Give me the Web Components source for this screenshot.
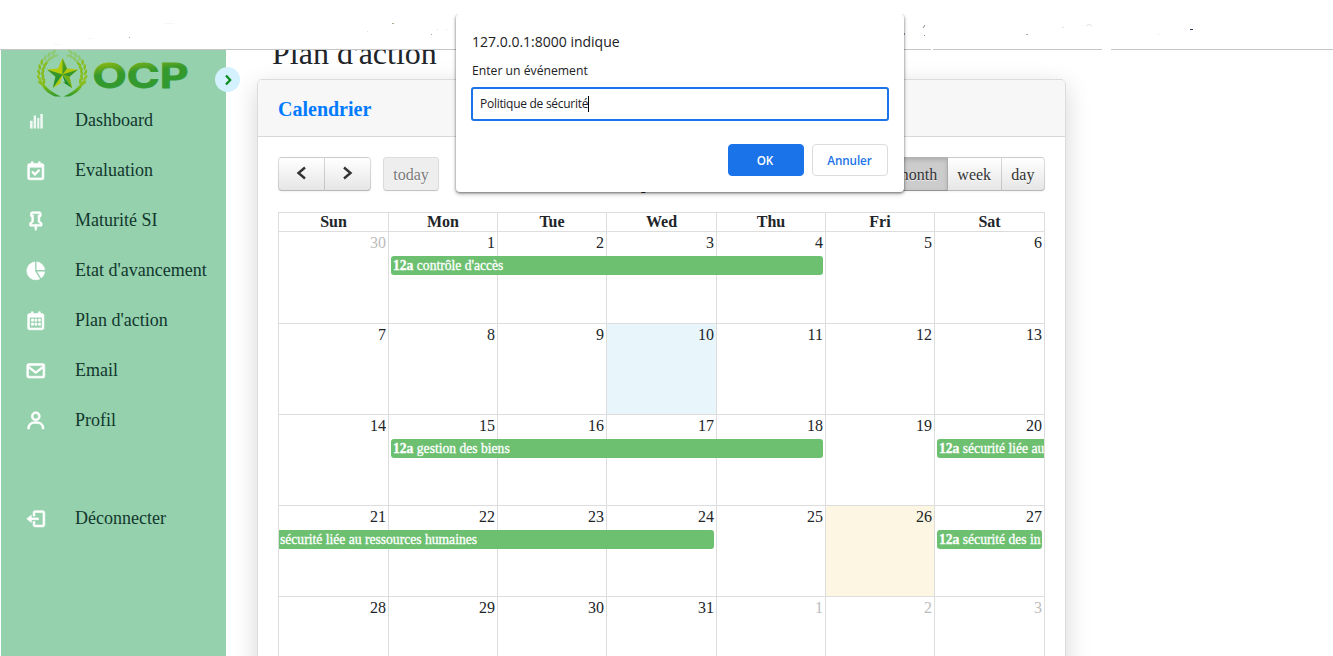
<!DOCTYPE html>
<html lang="fr">
<head>
<meta charset="utf-8">
<title>Plan d'action</title>
<style>
html,body{margin:0;height:100%;overflow:hidden;background:#fff;font-family:"Liberation Serif",serif;color:#212529}
</style>
</head>
<body>
<plan-app></plan-app>
<script>
const define = (name, html, init) => customElements.define(name, class extends HTMLElement {
  connectedCallback() {
    if (this.shadowRoot) return;
    this.attachShadow({mode: 'open'}).innerHTML = typeof html === 'function' ? html(this) : html;
    if (init) init(this);
  }
});

const ICONS = {
  bars: '<path fill-opacity=".85" stroke="none" d="M5.500 12h3v8.500h-3zM9.600 6h2.700v14.500H9.600zM13.600 9h2.300v11.500h-2.300zM17 4.500h2.800v16H17z"/>',
  check: '<path d="m11 17.414 5.707-5.707-1.414-1.414L11 14.586l-2.293-2.293-1.414 1.414z"/><path d="M19 4h-2V2h-2v2H9V2H7v2H5c-1.103 0-2 .897-2 2v14c0 1.103.897 2 2 2h14c1.103 0 2-.897 2-2V6c0-1.103-.897-2-2-2zm0 16H5V8h14z"/>',
  pin: '<path fill-rule="evenodd" d="M16 2H8a2 2 0 0 0-2 2v3l1.500 1v4.500L5.300 14.300A1 1 0 0 0 5 15v2a1 1 0 0 0 1 1h5v3l1 2 1-2v-3h5a1 1 0 0 0 1-1v-2a1 1 0 0 0-.3-.700L16.500 12.500V8l1.500-1V4a2 2 0 0 0-2-2zM8 4h8v1.500h-1.500V13l2.500 2.500v.5H7v-.5L9.500 13V5.500H8z"/>',
  pie: '<circle cx="12" cy="12" r="10"/><path d="M12 1v11l6.200 10M12 12h11" fill="none" stroke="#95d1ad" stroke-width="1.500"/>',
  calendar: '<path d="M7 10h2.500v2.500H7zm0 4.500h2.500V17H7zm4-4.500h2.200v2.500H11zm0 4.500h2.200V17H11zm4-4.500h2.200v2.500H15zm0 4.500h2.200V17H15z"/><path d="M19 4h-2V2h-2v2H9V2H7v2H5c-1.103 0-2 .897-2 2v14c0 1.103.897 2 2 2h14c1.103 0 2-.897 2-2V6c0-1.103-.897-2-2-2zm0 16H5V8h14z"/>',
  mail: '<path d="M20 4H4c-1.103 0-2 .897-2 2v12c0 1.103.897 2 2 2h16c1.103 0 2-.897 2-2V6c0-1.103-.897-2-2-2zm0 2v.511l-8 6.223-8-6.222V6h16zM4 18V9.044l7.386 5.745a.994.994 0 0 0 1.228 0L20 9.044 20.002 18H4z"/>',
  user: '<path d="M12 2a5 5 0 1 0 5 5 5 5 0 0 0-5-5zm0 8a3 3 0 1 1 3-3 3 3 0 0 1-3 3zm9 11v-1a7 7 0 0 0-7-7h-4a7 7 0 0 0-7 7v1h2v-1a5 5 0 0 1 5-5h4a5 5 0 0 1 5 5v1z"/>',
  logout: '<path d="m2 12 5 4v-3h8v-2H7V8z"/><path d="M20 3h-9c-1.103 0-2 .897-2 2v4h2V5h9v14h-9v-4H9v4c0 1.103.897 2 2 2h9c1.103 0 2-.897 2-2V5c0-1.103-.897-2-2-2z"/>'
};

define('nav-item', el => `<style>
:host{display:flex;align-items:center;height:50px;padding-left:24px;font-size:18px;color:#12372d}
svg{width:21.6px;height:21.6px;fill:#fff;stroke:#fff;stroke-width:.7;margin-right:28.4px;position:relative;top:1px;flex:none}
</style><svg viewBox="0 0 24 24">${ICONS[el.getAttribute('icon')]}</svg><slot></slot>`);

/* Laurel wreath: leaves are repeated along each arc. */
const leaves = (() => {
  let s = '';
  for (let i = 0; i < 8; i++) {
    const deg = 158 + i * 13, a = deg * Math.PI / 180;
    for (const [r, tilt] of [[23.500, 65], [19.500, 112]]) {
      const x = 25 + r * Math.cos(a), y = 25 + r * Math.sin(a);
      s += `<ellipse cx="${x.toFixed(1)}" cy="${y.toFixed(1)}" rx="3" ry="1.300" opacity="${i > 4 ? .4 : .95}" transform="rotate(${deg + tilt} ${x.toFixed(1)} ${y.toFixed(1)})"/>`;
    }
  }
  return s;
})();

define('ocp-logo', `<style>:host{display:block;height:45px;width:154px;margin-left:35px}svg{display:block;overflow:hidden}</style>
<svg width="154" height="47" viewBox="0 0 154 47">
<defs><linearGradient id="g" x1="0" y1="0" x2=".25" y2="1"><stop offset=".1" stop-color="#a8c20a"/><stop offset=".5" stop-color="#36992b"/><stop offset="1" stop-color="#2f9a31"/></linearGradient>
<linearGradient id="l" x1="0" y1="0" x2="0" y2="1"><stop offset="0" stop-color="#b7cf3a"/><stop offset=".55" stop-color="#7dba18"/><stop offset="1" stop-color="#2f9a2c"/></linearGradient>
<linearGradient id="d" x1="0" y1="0" x2="0" y2="1"><stop offset="0" stop-color="#5fa51b"/><stop offset="1" stop-color="#0f8a3a"/></linearGradient></defs>
<g transform="translate(1.200 -1)">
<g fill="#86bb16"><g>${leaves}</g><g transform="translate(50 0) scale(-1 1)">${leaves}</g></g>
<path d="M1 24C2 37 10 45 18 47.500h6C13 43 5 36 1 24zM49 24c-1 13-9 21-17 23.500h-6c11-4.500 19-11.500 23-23.500z" fill="url(#l)"/>
<g transform="translate(25.300 25.500)">
<path d="M0-16.500 4.500-6 15.500-5 7 2.200 9.600 13.500 0 7.500-9.600 13.500-7 2.200-15.500-5-4.500-6z" fill="#b3c90b"/>
<path d="M0-16.500 4.500-6 0 0zM15.500-5 7 2.200 0 0zM9.600 13.500 0 7.500V0zM-9.600 13.500-7 2.200 0 0zM-15.500-5-7 2.200 0 0z" fill="url(#d)"/>
<path d="M7 2.200 9.600 13.500 0 0z" fill="#6fb01a"/>
<path d="M0 1 2.500 8H-2.500z" fill="#95d1ad"/>
</g></g>
<text x="56.500" y="37.500" font-family="Inter" font-weight="700" font-size="34" textLength="96" lengthAdjust="spacingAndGlyphs" fill="url(#g)" stroke="url(#g)" stroke-width=".8">OCP</text>
</svg>`);

define('side-bar', `<style>
:host{display:flex;flex-direction:column;width:225px;margin-left:1px;background:#95d1ad;position:relative;flex:none}
.gap{height:48px;flex:none}
.toggle{position:absolute;left:214px;top:17px;width:25px;height:25px;border-radius:50%;background:#d4f1ff;z-index:2}
.toggle svg{display:block}
</style>
<ocp-logo></ocp-logo>
<nav-item icon="bars">Dashboard</nav-item><nav-item icon="check">Evaluation</nav-item><nav-item icon="pin">Maturité SI</nav-item><nav-item icon="pie">Etat d'avancement</nav-item><nav-item icon="calendar">Plan d'action</nav-item><nav-item icon="mail">Email</nav-item><nav-item icon="user">Profil</nav-item>
<div class="gap"></div><nav-item icon="logout">Déconnecter</nav-item>
<div class="toggle"><svg width="25" height="25" viewBox="0 0 25 25"><path d="m11 8.500 4.200 4.500-4.200 4.500" fill="none" stroke="#0b8a1b" stroke-width="2.200"/></svg></div>`);

define('top-bar', `<style>
:host{display:flex;align-items:flex-end;height:50px;background:#fff;flex:none;position:relative}
i{height:1px;background:#c6c6c6}
svg{position:absolute;left:0;top:0}
</style><i style="width:931px"></i><i style="width:169px;margin-left:2px"></i><i style="flex:1;margin-left:9px"></i>
<svg width="1333" height="48"><path d="M129 37.500h1M392 23.500h2M431 34.500h1M1026 34.500h2" stroke="#a9a98f"/><path d="M54 44.500h6M164 23.500h10M88 38.500h5" stroke="#f6f6f6"/><path d="M923 28l2-3M924 35l1 1" stroke="#888"/><path d="M1190 29.500h3M904 34h1" stroke="#203060"/><path d="M1086 26l3-2 3 2M1062 27.500h2M1158 34.500h1M367 31.500h1M437 29.500h1M446 29.500h1" stroke="#e2e2e2" fill="none"/></svg>`);

define('cal-button', el => `<style>
:host{display:flex;align-items:center;justify-content:center;box-sizing:border-box;height:34px;padding:1px 9.600px 0;border:1px solid;border-color:rgba(0,0,0,.12) rgba(0,0,0,.12) rgba(0,0,0,.28);background:linear-gradient(#fff,#e6e6e6);color:#333;font-size:16px;text-shadow:0 1px 1px rgba(255,255,255,.75);box-shadow:inset 0 1px 0 rgba(255,255,255,.2),0 1px 2px rgba(0,0,0,.05)}
:host([first]){border-radius:4px 0 0 4px}:host([last]){border-radius:0 4px 4px 0}:host([first][last]){border-radius:4px}
:host(:not([first])){border-left-width:0}
:host([active]){background:#ccc;box-shadow:inset 0 2px 4px rgba(0,0,0,.15),0 1px 2px rgba(0,0,0,.05)}
:host([disabled]){background:#e6e6e6;opacity:.65}
:host(:not([last])){border-right:1px solid rgba(0,0,0,.14)}
</style><slot></slot>`);

define('cal-event', el => `<style>
:host{display:block;box-sizing:border-box;height:19px;line-height:19px;padding:0 1px 0 2px;margin:0 2px 0 3px;background:#6cc070;color:#fff;border-radius:3px;font-size:13.600px;white-space:nowrap;overflow:hidden;z-index:1;min-width:0;grid-row:2;-webkit-text-stroke:.3px #fff}
:host([start]){margin-right:0;border-radius:3px 0 0 3px;padding-right:0}
:host([end]){margin-left:1px;border-radius:0 3px 3px 0;padding-left:1px}
div{overflow:hidden}
</style><div>${el.hasAttribute('time') ? `<b>${el.getAttribute('time')}</b> ` : ''}<slot></slot></div>`);

define('cal-week', el => {
  const days = el.getAttribute('days').split(' ');
  return `<style>
:host{display:grid;grid-template-columns:110px 109px 109px 110px 109px 109px 110px;grid-template-rows:25px 19px 1fr;height:91px;border-right:1px solid #ddd}
:host([tall]){height:92px}
.d{grid-row:1/4;box-sizing:border-box;border:solid #ddd;border-width:1px 0 0 1px;padding:2px 2px 0;font-size:16px;line-height:17px;text-align:right}
.o{color:#bcbcbc}.blue{background:#e8f6fc}.today{background:#fcf6e2}
</style>${days.map((d, i) => `<div class="d ${/o/.test(d) ? 'o' : ''} ${/b/.test(d) ? 'blue' : ''} ${/t/.test(d) ? 'today' : ''}" style="grid-column:${i + 1}">${parseInt(d)}</div>`).join('')}<slot></slot>`;
});

define('cal-month', `<style>
:host{display:block;width:767px;margin-top:21px}
.h{display:grid;grid-template-columns:110px 109px 109px 110px 109px 109px 110px;height:19px;border-right:1px solid #ddd}
.h b{box-sizing:border-box;border:solid #ddd;border-width:1px 0 0 1px;text-align:center;font-size:16px;line-height:18px}
</style>
<div class="h"><b>Sun</b><b>Mon</b><b>Tue</b><b>Wed</b><b>Thu</b><b>Fri</b><b>Sat</b></div>
<cal-week tall days="30o 1 2 3 4 5 6"><cal-event time="12a" style="grid-column:2/6">contrôle d'accès</cal-event></cal-week>
<cal-week days="7 8 9 10b 11 12 13"></cal-week>
<cal-week days="14 15 16 17 18 19 20"><cal-event time="12a" style="grid-column:2/6">gestion des biens</cal-event><cal-event start time="12a" style="grid-column:7">sécurité liée au ressources humaines</cal-event></cal-week>
<cal-week days="21 22 23 24 25 26t 27"><cal-event end style="grid-column:1/5">sécurité liée au ressources humaines</cal-event><cal-event time="12a" style="grid-column:7">sécurité des informations</cal-event></cal-week>
<cal-week days="28 29 30 31 1o 2o 3o"></cal-week>`);

define('cal-toolbar', `<style>
:host{display:flex;justify-content:space-between;width:767px;height:34px}
div{display:flex}h2{margin:0 4px 0 0;font-size:28px;line-height:42px;font-weight:700;white-space:nowrap}
.n{width:47px;padding:0 2px 2px 0}.n+.n{width:46px}.t{margin-left:12px;width:56px;padding:1px 0 0}
</style>
<div><cal-button class="n" first><svg width="14" height="14" viewBox="0 0 14 14"><path d="M11 1.500 4.500 7l6.500 5.500" fill="none" stroke="#333" stroke-width="2.400"/></svg></cal-button><cal-button class="n" last><svg width="14" height="14" viewBox="0 0 14 14"><path d="m4 1.500 6.500 5.500-6.500 5.500" fill="none" stroke="#333" stroke-width="2.400"/></svg></cal-button><cal-button class="t" first last disabled>today</cal-button></div>
<h2>July 2019</h2>
<div><cal-button first active>month</cal-button><cal-button>week</cal-button><cal-button last>day</cal-button></div>`);

define('content-card', `<style>
:host{display:block;box-sizing:border-box;width:809px;height:700px;margin-left:31px;border:1px solid #dcdcdc;border-radius:5px;background:#fff;box-shadow:0 7px 24px rgba(0,0,0,.17);overflow:hidden;flex:none}
header{height:56px;line-height:59px;box-sizing:content-box;background:#f7f7f7;border-bottom:1px solid #d8d8d8;padding-left:20px;color:#007bff;font-weight:700;font-size:20px}
section{padding:20px}
</style><header><slot name="title"></slot></header><section><slot></slot></section>`);

define('prompt-dialog', `<style>
:host{display:block;box-sizing:border-box;position:absolute;left:456px;top:14px;width:448px;height:178px;background:#fff;border-radius:4px;padding:17px 16px 0;z-index:5;box-shadow:0 1px 3px rgba(0,0,0,.55),0 3px 5px rgba(0,0,0,.12);clip-path:inset(0 -10px -12px -10px);font-family:"Open Sans",sans-serif;color:#202124}
h1{margin:0;font-size:14px;line-height:22px;font-weight:400}
p{margin:8px 0 0;font-size:12.200px;line-height:20px}
.f{display:flex;align-items:center;box-sizing:border-box;height:34px;width:418px;margin:6px 0 0 -1px;border:2px solid #1a73e8;border-radius:3px;padding-left:7px;font-size:12px;letter-spacing:-.28px}
.f i{width:1px;height:16px;background:#000;margin-top:-1px}
.f span{margin-top:-1px}
.b{display:flex;justify-content:flex-end;gap:8px;margin-top:23px}
button{box-sizing:border-box;width:76px;height:32px;border-radius:4px;font:600 11.700px "Open Sans",sans-serif;border:1px solid #dadce0;background:#fff;color:#1a73e8;padding:0 1px 1px 0;letter-spacing:-.1px}
.ok{background:#1a73e8;color:#fff;border-color:#1a73e8;padding-right:2px}
</style>
<h1><span>127.0.0.1:8000 indique</span></h1><p><span>Enter un événement</span></p><div class="f"><span>Politique de sécurité</span><i></i></div>
<div class="b"><button class="ok">OK</button><button>Annuler</button></div>`);

define('plan-app', `<style>
:host{display:flex;flex-direction:column;height:656px;position:relative;overflow:hidden;background:#fff}
main{display:flex;flex:1;min-height:0;overflow:hidden}
.c{display:flex;flex-direction:column;flex:1;overflow:hidden}
h1{margin:-16px 0 0 46px;font-size:32px;line-height:38px;height:45px;font-weight:400;flex:none}
</style>
<top-bar></top-bar>
<main><side-bar></side-bar><div class="c"><h1>Plan d'action</h1>
<content-card><span slot="title">Calendrier</span><cal-toolbar></cal-toolbar><cal-month></cal-month></content-card></div></main>
<prompt-dialog></prompt-dialog>`);
</script>
</body>
</html>
